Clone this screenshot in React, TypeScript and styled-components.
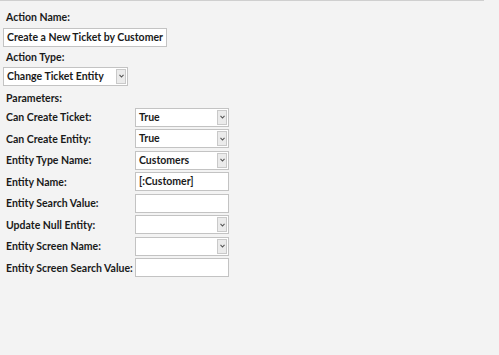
import React from 'react';
import styled, { createGlobalStyle } from 'styled-components';

const GlobalStyle = createGlobalStyle`
  html, body {
    margin: 0;
    padding: 0;
    background: #f3f3f3;
  }
  body {
    font-family: Lato, "Open Sans", sans-serif;
    font-size: 10.5px;
    font-weight: 700;
    color: #1a1a1a;
  }
`;

const Page = styled.div`
  width: 499px;
  height: 355px;
  background: #f3f3f3;
`;

const TopRule = styled.div`
  width: 484px;
  height: 1px;
  background: #cfcfcf;
`;

const Form = styled.div`
  display: flex;
  flex-direction: column;
  padding: 8px 0 0 3px;
`;

const Label = styled.div<{ $gap?: number }>`
  height: 16px;
  line-height: 16px;
  padding-left: 3px;
  margin-bottom: ${(p) => p.$gap ?? 3}px;
`;

const TextBox = styled.div<{ $width: number }>`
  box-sizing: border-box;
  width: ${(p) => p.$width}px;
  height: 19px;
  line-height: 17px;
  padding: 0 3px;
  background: #fff;
  border: 1px solid #c3c3c3;
  white-space: nowrap;
  overflow: hidden;
  margin-bottom: 2px;
`;

const SelectBox = styled.div<{ $width: number }>`
  box-sizing: border-box;
  width: ${(p) => p.$width}px;
  height: 19px;
  display: flex;
  align-items: stretch;
  background: #fff;
  border: 1px solid #c3c3c3;
  margin-bottom: 4px;
`;

const SelectText = styled.div`
  flex: 1;
  line-height: 17px;
  padding: 0 3px;
  white-space: nowrap;
  overflow: hidden;
`;

const Arrow = styled.div`
  width: 10px;
  margin: 1px;
  box-sizing: border-box;
  border: 1px solid #c9c9c9;
  background: #ebebeb;
  display: flex;
  align-items: center;
  justify-content: center;
`;

const ParamGrid = styled.div`
  display: grid;
  grid-template-columns: 129px 94px;
  grid-auto-rows: 19px;
  row-gap: 2.57px;
  padding-left: 3px;
  margin-top: 2px;
`;

const ParamLabel = styled.div`
  display: flex;
  align-items: center;
  white-space: nowrap;
`;

const ParamSelect = styled(SelectBox)`
  margin: 0;
`;

const ParamText = styled(TextBox)`
  margin: 0;
`;

const Chevron = () => (
  <svg width="5" height="4" viewBox="0 0 5 4">
    <path d="M0.5 0.8 L2.5 3 L4.5 0.8" fill="none" stroke="#555" strokeWidth="1.1" />
  </svg>
);

type Param = { label: string; kind: 'select' | 'text'; value: string };

const params: Param[] = [
  { label: 'Can Create Ticket:', kind: 'select', value: 'True' },
  { label: 'Can Create Entity:', kind: 'select', value: 'True' },
  { label: 'Entity Type Name:', kind: 'select', value: 'Customers' },
  { label: 'Entity Name:', kind: 'text', value: '[:Customer]' },
  { label: 'Entity Search Value:', kind: 'text', value: '' },
  { label: 'Update Null Entity:', kind: 'select', value: '' },
  { label: 'Entity Screen Name:', kind: 'select', value: '' },
  { label: 'Entity Screen Search Value:', kind: 'text', value: '' },
];

export default function App() {
  return (
    <Page>
      <GlobalStyle />
      <TopRule />
      <Form>
        <Label>Action Name:</Label>
        <TextBox $width={164}>Create a New Ticket by Customer</TextBox>
        <Label $gap={1.5}>Action Type:</Label>
        <SelectBox $width={125}>
          <SelectText>Change Ticket Entity</SelectText>
          <Arrow>
            <Chevron />
          </Arrow>
        </SelectBox>
        <Label $gap={0}>Parameters:</Label>
        <ParamGrid>
          {params.map((p) => (
            <React.Fragment key={p.label}>
              <ParamLabel>{p.label}</ParamLabel>
              {p.kind === 'select' ? (
                <ParamSelect $width={94}>
                  <SelectText>{p.value}</SelectText>
                  <Arrow>
                    <Chevron />
                  </Arrow>
                </ParamSelect>
              ) : (
                <ParamText $width={94}>{p.value}</ParamText>
              )}
            </React.Fragment>
          ))}
        </ParamGrid>
      </Form>
    </Page>
  );
}
